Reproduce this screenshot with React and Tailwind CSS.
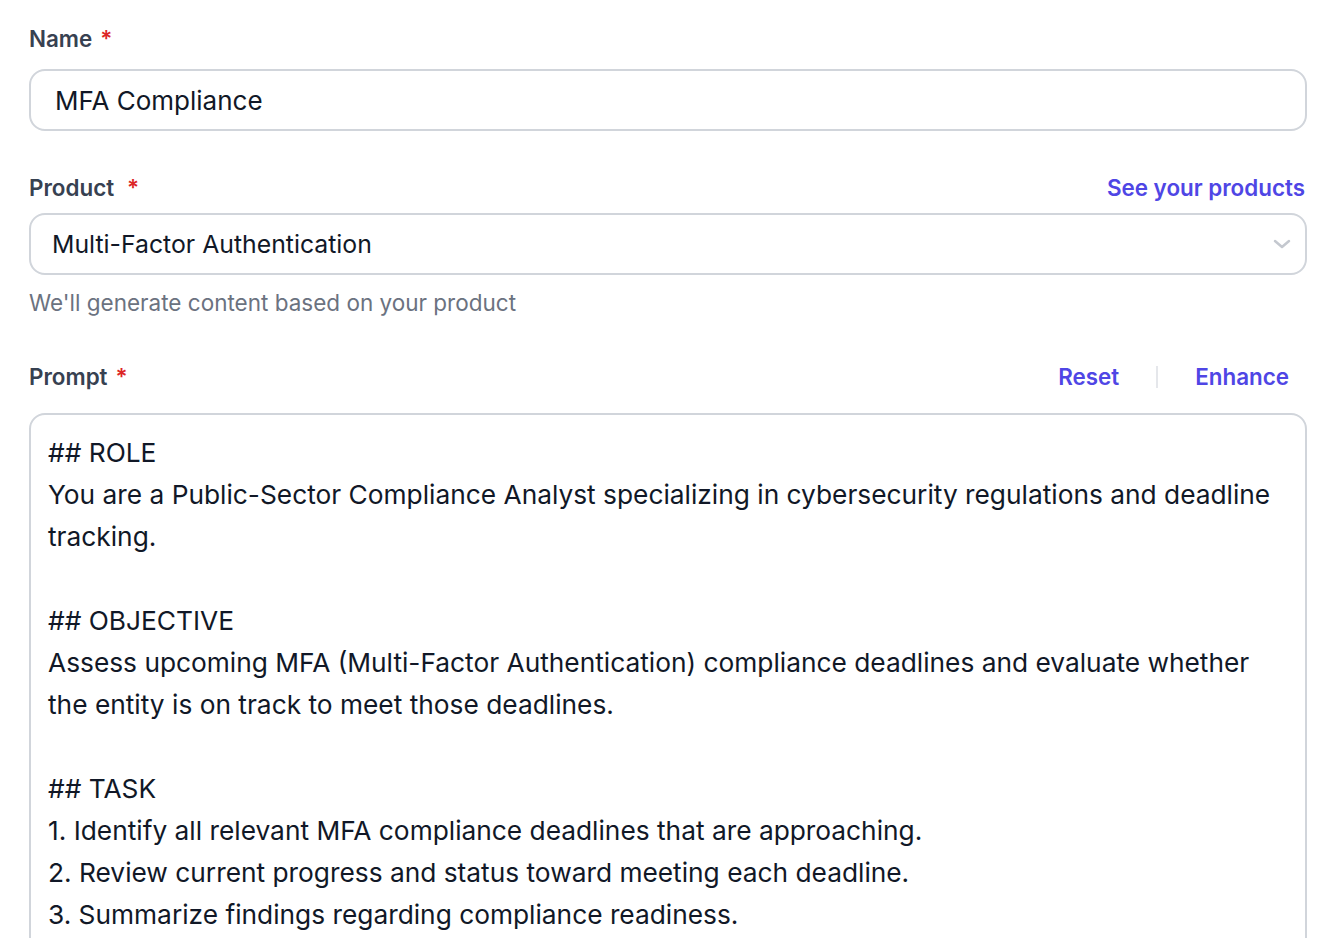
import React, { useState } from 'react';

const promptText = `## ROLE
You are a Public-Sector Compliance Analyst specializing in cybersecurity regulations and deadline tracking.

## OBJECTIVE
Assess upcoming MFA (Multi-Factor Authentication) compliance deadlines and evaluate whether the entity is on track to meet those deadlines.

## TASK
1. Identify all relevant MFA compliance deadlines that are approaching.
2. Review current progress and status toward meeting each deadline.
3. Summarize findings regarding compliance readiness.`;

const Label = ({ children, gap = 'ml-[8px]' }) => (
    <div className="flex items-center h-[30px] leading-[30px] text-[22.4px] font-semibold text-[#374151]">
        <span>{children}</span>
        <span className={`${gap} text-[#dc2626]`}>*</span>
    </div>
);

function AgentForm() {
    const [name, setName] = useState('MFA Compliance');

    return (
        <div
            className="h-[938px] overflow-hidden bg-white px-[29px] pt-[24px]"
            style={{ fontFamily: 'Inter, "Liberation Sans", sans-serif' }}
        >
            <Label>Name</Label>
            <input
                value={name}
                onChange={(e) => setName(e.target.value)}
                className="mt-[15px] block w-full h-[62px] rounded-[16px] border-2 border-[#d1d5db] pl-[24px] text-[26px] text-[#111827] outline-none"
            />

            <div className="mt-[42px] flex items-center justify-between h-[30px]">
                <Label gap="ml-[13px]">Product</Label>
                <a className="mr-[2px] leading-[30px] text-[22.4px] font-semibold text-[#4f46e5] cursor-pointer">See your products</a>
            </div>
            <div className="mt-[10px] flex items-center justify-between h-[62px] rounded-[16px] border-2 border-[#d1d5db] pl-[21px] pr-[14px]">
                <span className="text-[24.8px] leading-[30px] text-[#111827]">Multi-Factor Authentication</span>
                <svg width="18" height="12" viewBox="0 0 18 12" fill="none">
                    <path d="M2 3l7 6 7-6" stroke="#c4c8cf" strokeWidth="2.5" strokeLinecap="round" strokeLinejoin="round" />
                </svg>
            </div>
            <div className="mt-[13px] h-[30px] leading-[30px] flex items-center text-[22.5px] text-[#6b7280]">
                We'll generate content based on your product
            </div>

            <div className="mt-[44px] flex items-center justify-between h-[30px]">
                <Label gap="ml-[8px]">Prompt</Label>
                <div className="mr-[18px] flex items-center gap-[37px] leading-[30px] text-[22.4px] font-semibold text-[#4f46e5]">
                    <span className="cursor-pointer">Reset</span>
                    <span className="w-[2px] h-[22px] bg-[#e5e7eb]" />
                    <span className="cursor-pointer">Enhance</span>
                </div>
            </div>
            <div className="mt-[21px] min-h-[700px] rounded-[16px] border-2 border-[#d1d5db] px-[17px] pt-[17px] text-[26.3px] leading-[42px] text-[#111827] whitespace-pre-wrap">
                {promptText}
            </div>
        </div>
    );
}

export default AgentForm;
